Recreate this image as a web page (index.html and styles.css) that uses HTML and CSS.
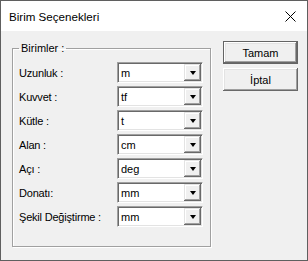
FILE: index.html
```html
<!DOCTYPE html>
<html lang="tr">
  <head>
    <meta charset="UTF-8" />
    <title>Birim Seçenekleri</title>
    <link rel="stylesheet" href="styles.css">
  </head>
  <body>
    <div class="window">
      <div class="titlebar">
        <span class="title">Birim Seçenekleri</span>
        <svg class="close" width="11" height="11" viewBox="0 0 11 11">
          <path d="M0.5 0.5 L10.5 10.5 M10.5 0.5 L0.5 10.5" stroke="#000" stroke-width="1" fill="none" />
        </svg>
      </div>

      <div class="content">
        <fieldset class="group">
          <legend>Birimler :</legend>

          <div class="row">
            <label>Uzunluk :</label>
            <div class="combo"><span class="value">m</span><span class="drop"><i></i></span></div>
          </div>
          <div class="row">
            <label>Kuvvet :</label>
            <div class="combo"><span class="value">tf</span><span class="drop"><i></i></span></div>
          </div>
          <div class="row">
            <label>Kütle :</label>
            <div class="combo"><span class="value">t</span><span class="drop"><i></i></span></div>
          </div>
          <div class="row">
            <label>Alan :</label>
            <div class="combo"><span class="value">cm</span><span class="drop"><i></i></span></div>
          </div>
          <div class="row">
            <label>Açı :</label>
            <div class="combo"><span class="value">deg</span><span class="drop"><i></i></span></div>
          </div>
          <div class="row">
            <label>Donatı:</label>
            <div class="combo"><span class="value">mm</span><span class="drop"><i></i></span></div>
          </div>
          <div class="row">
            <label>Şekil Değiştirme :</label>
            <div class="combo"><span class="value">mm</span><span class="drop"><i></i></span></div>
          </div>
        </fieldset>

        <div class="buttons">
          <button class="btn default">Tamam</button>
          <button class="btn">İptal</button>
        </div>
      </div>
    </div>
  </body>
</html>
```

FILE: styles.css
```css
body {
  margin: 0;
  font-family: "Liberation Sans", Arial, sans-serif;
  font-size: 11px;
  color: #000000;
}

.window {
  width: 308px;
  height: 261px;
  box-sizing: border-box;
  border: 1px solid #5f5f5f;
  display: flex;
  flex-direction: column;
}

.titlebar {
  height: 30px;
  background-color: #ffffff;
  display: flex;
  align-items: center;
  justify-content: space-between;
  padding: 0 11px 0 8px;
}

.title {
  font-size: 11.6px;
}

.close {
  display: block;
}

.content {
  flex: 1;
  background-color: #f0f0f0;
  display: flex;
  align-items: flex-start;
  padding: 10px 0 0 11px;
}

.group {
  width: 199px;
  height: 205px;
  box-sizing: border-box;
  flex-shrink: 0;
  margin: 1px 0 0 0;
  padding: 0 0 0 6px;
  min-width: 0;
  border: 1px solid #a0a0a0;
  box-shadow: 1px 1px 0 #ffffff, inset 1px 1px 0 #ffffff;
}

.group legend {
  padding: 0 2px;
  line-height: 13px;
}

.row {
  display: flex;
  align-items: center;
  height: 21px;
  margin-top: 3px;
}

.row:first-of-type {
  margin-top: 7px;
}

.row label {
  width: 98px;
  flex-shrink: 0;
  letter-spacing: -0.2px;
}

.combo {
  width: 86px;
  height: 21px;
  flex-shrink: 0;
  box-sizing: border-box;
  display: flex;
  align-items: stretch;
  background-color: #ffffff;
  border-top: 1px solid #a0a0a0;
  border-left: 1px solid #a0a0a0;
  border-right: 1px solid #ffffff;
  border-bottom: 1px solid #ffffff;
  box-shadow: inset 1px 1px 0 #696969, inset -1px -1px 0 #e3e3e3;
  padding: 1px;
}

.value {
  flex: 1;
  display: flex;
  align-items: center;
  padding-left: 2px;
}

.drop {
  width: 17px;
  box-sizing: border-box;
  background-color: #f0f0f0;
  display: flex;
  align-items: center;
  justify-content: center;
  box-shadow: inset -1px -1px 0 #696969, inset 1px 1px 0 #e3e3e3, inset -2px -2px 0 #a0a0a0, inset 2px 2px 0 #ffffff;
}

.drop i {
  width: 0;
  height: 0;
  border-left: 3.5px solid transparent;
  border-right: 3.5px solid transparent;
  border-top: 4px solid #000000;
}

.buttons {
  display: flex;
  flex-direction: column;
  gap: 4px;
  margin-left: 12px;
}

.btn {
  width: 75px;
  height: 23px;
  padding: 0;
  border: none;
  background-color: #f0f0f0;
  font-family: "Liberation Sans", Arial, sans-serif;
  font-size: 11px;
  color: #000000;
  box-shadow: inset -1px -1px 0 #696969, inset 1px 1px 0 #ffffff, inset -2px -2px 0 #a0a0a0, inset 2px 2px 0 #e3e3e3;
}

.btn.default {
  border: 1px solid #646464;
}
```
